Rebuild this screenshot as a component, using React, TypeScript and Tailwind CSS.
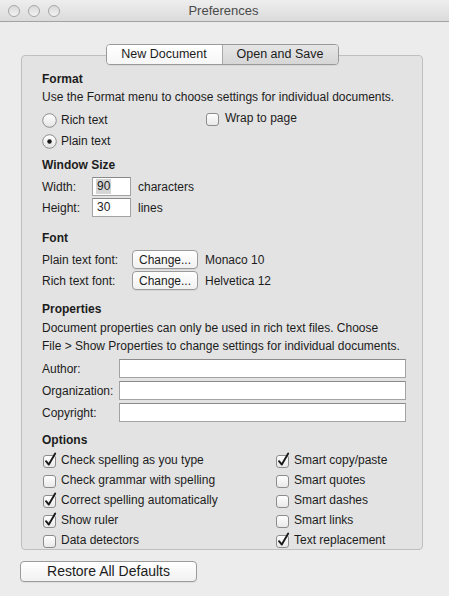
import React from "react";

const font = "font-['Liberation_Sans',Arial,sans-serif]";

const Checkbox = ({ checked }: { checked?: boolean }) => (
  <svg width="16" height="16" viewBox="0 0 16 16" className="shrink-0">
    <defs>
      <linearGradient id="cbfill" x1="0" y1="0" x2="0" y2="1">
        <stop offset="0" stopColor="#ffffff" />
        <stop offset="1" stopColor="#e8e8e8" />
      </linearGradient>
    </defs>
    <rect x="0.5" y="3.5" width="12" height="12" rx="2.5" fill="url(#cbfill)" stroke="#8c8c8c" />
    {checked && (
      <path d="M3 9.2 L5.8 12.6 L12.2 1.6" fill="none" stroke="#1a1a1a" strokeWidth="1.9" strokeLinecap="round" strokeLinejoin="round" />
    )}
  </svg>
);

const Radio = ({ selected }: { selected?: boolean }) => (
  <svg width="15" height="15" viewBox="0 0 15 15" className="shrink-0">
    <defs>
      <linearGradient id="rdfill" x1="0" y1="0" x2="0" y2="1">
        <stop offset="0" stopColor="#ffffff" />
        <stop offset="1" stopColor="#e4e4e4" />
      </linearGradient>
    </defs>
    <circle cx="7.5" cy="7.5" r="6.8" fill="url(#rdfill)" stroke="#8c8c8c" />
    {selected && <circle cx="7.5" cy="7.5" r="2.2" fill="#1a1a1a" />}
  </svg>
);

const Field = ({ className, value, selected }: { className: string; value?: string; selected?: boolean }) => (
  <div className={`h-[19px] shrink-0 bg-white border border-[#a3a3a3] border-t-[#8a8a8a] flex items-center px-[3px] ${className}`}>
    {value && <span className={`leading-[15px] px-[1px] ${selected ? "bg-[#d5d5d5]" : ""}`}>{value}</span>}
  </div>
);

const PushButton = ({ children, className }: { children: React.ReactNode; className: string }) => (
  <div className={`flex items-center justify-center shrink-0 whitespace-nowrap rounded-[4px] border border-[#9b9b9b] bg-gradient-to-b from-white to-[#f1f1f1] shadow-[0_1px_0_rgba(0,0,0,0.06)] ${className}`}>
    {children}
  </div>
);

const Heading = ({ children, className = "" }: { children: React.ReactNode; className?: string }) => (
  <div className={`h-[18px] flex items-center font-bold ${className}`}>{children}</div>
);

const leftOptions: [string, boolean][] = [
  ["Check spelling as you type", true],
  ["Check grammar with spelling", false],
  ["Correct spelling automatically", true],
  ["Show ruler", true],
  ["Data detectors", false],
];

const rightOptions: [string, boolean][] = [
  ["Smart copy/paste", true],
  ["Smart quotes", false],
  ["Smart dashes", false],
  ["Smart links", false],
  ["Text replacement", true],
];

const OptionColumn = ({ items }: { items: [string, boolean][] }) => (
  <div className="flex flex-col">
    {items.map(([label, checked]) => (
      <div key={label} className="h-[20px] flex items-center gap-[2px]">
        <Checkbox checked={checked} />
        <span>{label}</span>
      </div>
    ))}
  </div>
);

export default function App() {
  return (
    <div className={`w-[449px] h-[596px] bg-[#ececec] text-[12px] text-[#1c1c1c] whitespace-nowrap ${font} overflow-hidden`}>
      {/* title bar */}
      <div className="h-[22px] flex items-center border-b border-[#a2a2a2] bg-gradient-to-b from-[#eeeeee] to-[#dbdbdb]">
        <div className="flex gap-[8px] pl-[8px]">
          {[0, 1, 2].map((i) => (
            <div key={i} className="w-[12px] h-[12px] rounded-full border border-[#a6a6a6] bg-gradient-to-b from-[#d9d9d9] to-[#f3f3f3]" />
          ))}
        </div>
        <div className="flex-1 text-center text-[13px] text-[#4a4a4a] pr-[62px]">Preferences</div>
      </div>

      <div className="pl-[21px] pt-[33px]">
        {/* group box */}
        <div className="w-[402px] h-[495px] border border-[#bfbfbf] rounded-[4px] bg-[#e3e3e3] pl-[20px]">
          <div className="flex justify-center -mt-[12px] -ml-[20px]">
            <div className="flex h-[21px] rounded-[4px] border border-[#999999] overflow-hidden text-[12.5px] shadow-[0_1px_0_rgba(0,0,0,0.05)]">
              <div className="w-[116px] flex items-center justify-center bg-gradient-to-b from-white to-[#f6f6f6] border-r border-[#a8a8a8]">New Document</div>
              <div className="w-[115px] flex items-center justify-center bg-gradient-to-b from-[#e6e6e6] to-[#d6d6d6]">Open and Save</div>
            </div>
          </div>

          <Heading className="mt-[5px]">Format</Heading>
          <div className="h-[18px] flex items-center">Use the Format menu to choose settings for individual documents.</div>
          <div className="mt-[5px] h-[18px] flex items-center">
            <div className="w-[164px] flex items-center gap-[4px]">
              <Radio />
              <span>Rich text</span>
            </div>
            <div className="flex items-center gap-[3px] -mt-[5px]">
              <Checkbox />
              <span>Wrap to page</span>
            </div>
          </div>
          <div className="mt-[3px] h-[18px] flex items-center gap-[4px]">
            <Radio selected />
            <span>Plain text</span>
          </div>

          <Heading className="mt-[6px]">Window Size</Heading>
          <div className="mt-[3px] h-[19px] flex items-center">
            <span className="w-[50px]">Width:</span>
            <Field className="w-[39px]" value="90" selected />
            <span className="ml-[7px]">characters</span>
          </div>
          <div className="mt-[2px] h-[19px] flex items-center">
            <span className="w-[50px]">Height:</span>
            <Field className="w-[39px]" value="30" />
            <span className="ml-[7px]">lines</span>
          </div>

          <Heading className="mt-[12px]">Font</Heading>
          <div className="mt-[3px] h-[19px] flex items-center">
            <span className="w-[90px]">Plain text font:</span>
            <PushButton className="w-[66px] h-[19px]">Change...</PushButton>
            <span className="ml-[7px]">Monaco 10</span>
          </div>
          <div className="mt-[2px] h-[19px] flex items-center">
            <span className="w-[90px]">Rich text font:</span>
            <PushButton className="w-[66px] h-[19px]">Change...</PushButton>
            <span className="ml-[7px]">Helvetica 12</span>
          </div>

          <Heading className="mt-[10px]">Properties</Heading>
          <div className="mt-[1px] leading-[18px]">
            Document properties can only be used in rich text files. Choose
            <br />
            File &gt; Show Properties to change settings for individual documents.
          </div>
          {["Author:", "Organization:", "Copyright:"].map((label, i) => (
            <div key={label} className={`${i === 0 ? "mt-[4px]" : "mt-[3px]"} h-[19px] flex items-center`}>
              <span className="w-[77px] shrink-0">{label}</span>
              <Field className="w-[287px]" />
            </div>
          ))}

          <Heading className="mt-[9px]">Options</Heading>
          <div className="mt-[1px] grid grid-cols-[233px_1fr] pl-[1px]">
            <OptionColumn items={leftOptions} />
            <OptionColumn items={rightOptions} />
          </div>
        </div>
      </div>

      <div className="pl-[20px] mt-[11px]">
        <PushButton className="w-[177px] h-[21px] text-[14px]">Restore All Defaults</PushButton>
      </div>
    </div>
  );
}
